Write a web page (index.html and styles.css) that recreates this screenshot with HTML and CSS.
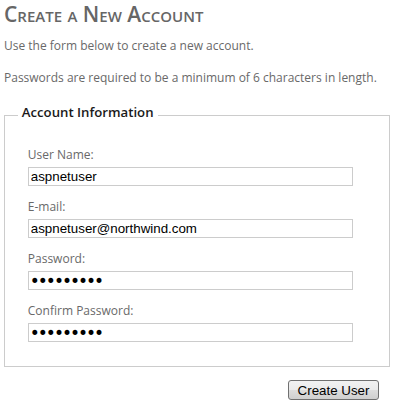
FILE: index.html
```html
<!DOCTYPE html>
<html>
<head>
<meta charset="utf-8">
<link rel="stylesheet" href="styles.css">
</head>
<body>
<div class="page">
  <h2 class="title">Create a New Account</h2>
  <p class="intro first">Use the form below to create a new account.</p>
  <p class="intro">Passwords are required to be a minimum of 6 characters in length.</p>
  <div class="account-info">
    <fieldset class="register">
      <legend class="legend">Account Information</legend>
      <div class="row">
        <label class="label">User Name:</label>
        <input class="text-entry" type="text" value="aspnetuser">
      </div>
      <div class="row">
        <label class="label">E-mail:</label>
        <input class="text-entry" type="text" value="aspnetuser@northwind.com">
      </div>
      <div class="row">
        <label class="label">Password:</label>
        <input class="text-entry password" type="password" value="123456789">
      </div>
      <div class="row">
        <label class="label">Confirm Password:</label>
        <input class="text-entry password" type="password" value="123456789">
      </div>
    </fieldset>
    <div class="submit-row">
      <button class="submit-button" type="button">Create User</button>
    </div>
  </div>
</div>
</body>
</html>
```
FILE: styles.css
```css
html, body {
  margin: 0;
  padding: 0;
  background: #ffffff;
}
.page {
  padding: 0 4px;
  font-family: "Open Sans", "Noto Sans", sans-serif;
  font-size: 12px;
  color: #696969;
}
.title {
  margin: 0;
  font-size: 21px;
  line-height: 28px;
  font-weight: 600;
  font-variant: small-caps;
  color: #666666;
}
.intro {
  margin: 12px 0 0 0;
  line-height: 20px;
}
.intro.first {
  margin-top: 8px;
}
.account-info {
  width: 386px;
}
.register {
  margin: 13px 0 0 0;
  padding: 17px 12.8px 14px 12.8px;
  border: 1px solid #cccccc;
}
.legend {
  padding: 2px 4px 8px 4px;
  font-size: 13.2px;
  font-weight: 600;
  color: #1a1a1a;
}
.row {
  margin: 0 10px 0 10px;
  padding-bottom: 12px;
}
.row:last-child {
  padding-bottom: 10px;
}
.label {
  display: block;
  line-height: 17px;
  margin-bottom: 4px;
  color: #696969;
}
.text-entry {
  display: block;
  box-sizing: border-box;
  width: 325px;
  height: 19px;
  margin: 0;
  padding: 0 2px;
  border: 1px solid #cccccc;
  font-family: "Liberation Sans", Arial, sans-serif;
  font-size: 13.33px;
  color: #000000;
  background: #ffffff;
}
.password {
  font-family: "DejaVu Sans", sans-serif;
  font-size: 17px;
  letter-spacing: -2px;
  padding: 0 1px;
}
.submit-row {
  display: flex;
  justify-content: flex-end;
  padding-right: 11px;
  margin-top: 13px;
}
.submit-button {
  box-sizing: border-box;
  width: 91px;
  height: 20px;
  padding: 0;
  border: 1px solid #707070;
  border-radius: 3px;
  background: linear-gradient(#f2f2f2 0%, #ebebeb 50%, #dddddd 51%, #cfcfcf 100%);
  font-family: "Liberation Sans", Arial, sans-serif;
  font-size: 13.33px;
  color: #000000;
}
```
